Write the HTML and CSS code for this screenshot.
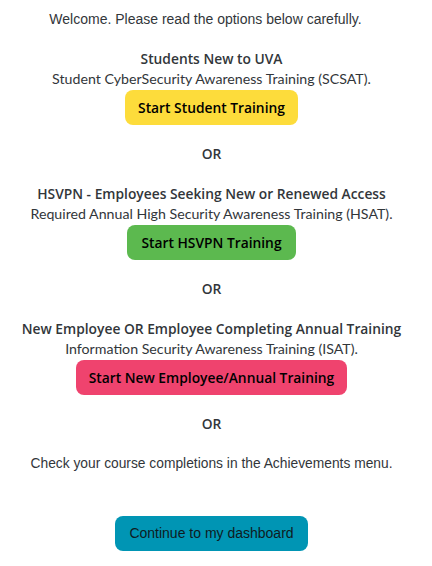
FILE: index.html
```html
<!DOCTYPE html>
<html lang="en">
<head>
  <meta charset="UTF-8">
  <title>Welcome</title>
  <meta name="viewport" content="width=device-width, initial-scale=1.0">
  <link rel="stylesheet" href="styles.css">
</head>
<body>
  <div class="welcome">
    <p class="intro">Welcome. Please read the options below carefully.</p>

    <div class="option">
      <div class="option-title">Students New to UVA</div>
      <div class="option-desc">Student CyberSecurity Awareness Training (SCSAT).</div>
      <a class="btn btn-yellow" href="#">Start Student Training</a>
    </div>

    <div class="or">OR</div>

    <div class="option">
      <div class="option-title">HSVPN - Employees Seeking New or Renewed Access</div>
      <div class="option-desc">Required Annual High Security Awareness Training (HSAT).</div>
      <a class="btn btn-green" href="#">Start HSVPN Training</a>
    </div>

    <div class="or">OR</div>

    <div class="option">
      <div class="option-title">New Employee OR Employee Completing Annual Training</div>
      <div class="option-desc">Information Security Awareness Training (ISAT).</div>
      <a class="btn btn-pink" href="#">Start New Employee/Annual Training</a>
    </div>

    <div class="or">OR</div>

    <p class="note">Check your course completions in the Achievements menu.</p>

    <a class="btn btn-blue" href="#">Continue to my dashboard</a>
  </div>
</body>
</html>
```

FILE: styles.css
```css
html, body {
  margin: 0;
  padding: 0;
  background: #fff;
}

.welcome {
  display: flex;
  flex-direction: column;
  align-items: center;
  text-align: center;
  padding: 9px 9px 0 0;
  color: #32363a;
  font-family: Lato, sans-serif;
  font-size: 14px;
  line-height: 20px;
}

.intro, .note {
  margin: 0;
  font-family: "Liberation Sans", Arial, sans-serif;
}

.intro {
  margin-bottom: 20px;
  padding-right: 12px;
}

.option {
  display: flex;
  flex-direction: column;
  align-items: center;
}

.option-title, .or, .btn {
  font-family: "Open Sans", sans-serif;
  font-weight: 600;
  font-size: 13.8px;
}

.option-desc {
  font-size: 14.2px;
}

.or {
  margin: 19px 0 20px;
}

.note {
  margin-bottom: 41px;
  font-size: 13.8px;
}

.btn {
  display: inline-block;
  margin-top: 1px;
  padding: 0 13px;
  height: 35px;
  line-height: 35px;
  border-radius: 8px;
  color: #000;
  text-decoration: none;
}

.btn-yellow { background: #fddc3b; }
.btn-green { background: #5cb94f; padding: 0 14px; }
.btn-pink { background: #ef436e; }

.btn-blue {
  background: #0095b4;
  font-family: "Liberation Sans", Arial, sans-serif;
  font-weight: normal;
  font-size: 14px;
  padding: 0 14px;
  color: #0f1b22;
}
```
